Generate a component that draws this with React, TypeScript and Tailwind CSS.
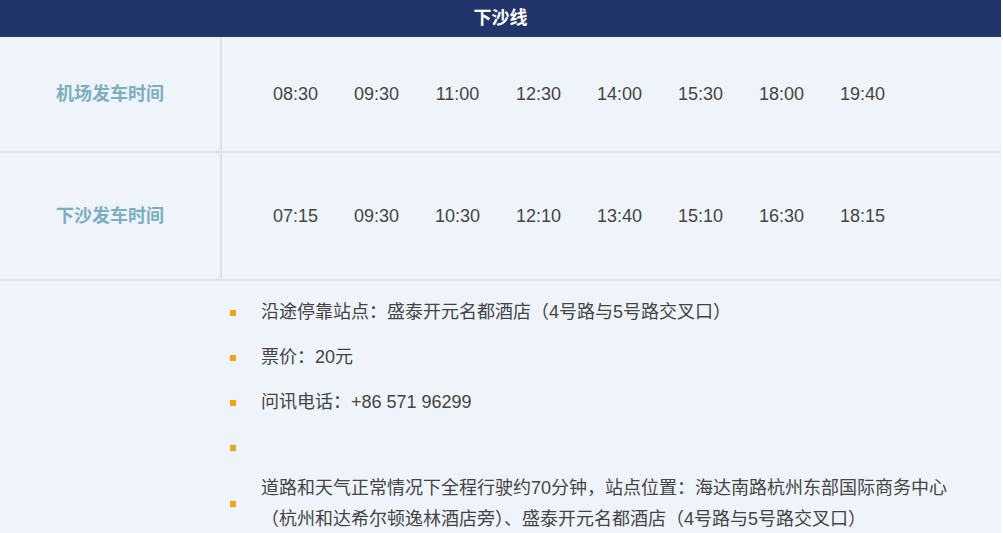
const airportTimes = ["08:30", "09:30", "11:00", "12:30", "14:00", "15:30", "18:00", "19:40"];
const xiashaTimes = ["07:15", "09:30", "10:30", "12:10", "13:40", "15:10", "16:30", "18:15"];

function TimeRow({ label, times, height }: { label: string; times: string[]; height: string }) {
  return (
    <div className={`flex border-b-2 border-[#dde2ea] ${height}`}>
      <div className="flex w-[222px] shrink-0 items-center justify-center border-r-2 border-[#dde2ea] text-[18px] font-bold text-[#7aafbf]">
        {label}
      </div>
      <div className="flex items-center pl-[33px] text-[18px] text-[#444]">
        {times.map((t, i) => (
          <span key={i} className="w-[81px] text-center">
            {t}
          </span>
        ))}
      </div>
    </div>
  );
}

export default function App() {
  return (
    <div
      className="h-[533px] w-[1003px] overflow-hidden bg-white pr-[2px]"
      style={{ fontFamily: '"Liberation Sans", "Noto Sans CJK SC", sans-serif' }}
    >
      <div className="h-full bg-[#eff4fb]">
        {/* Header */}
        <div className="flex h-[37px] items-center justify-center bg-[#22356b] text-[18px] font-bold text-white">
          下沙线
        </div>

        <TimeRow label="机场发车时间" times={airportTimes} height="h-[116px]" />
        <TimeRow label="下沙发车时间" times={xiashaTimes} height="h-[128px]" />

        {/* Notes */}
        <ul className="pl-[230px] pt-[9px] text-[18px] text-[#444]">
          {[
            "沿途停靠站点：盛泰开元名都酒店（4号路与5号路交叉口）",
            "票价：20元",
            "问讯电话：+86 571 96299",
            "",
          ].map((item, i) => (
            <li key={i} className="flex h-[45px] items-center">
              <span className="mr-[25px] h-[6px] w-[6px] shrink-0 bg-[#f7a215]" />
              <span>{item}</span>
            </li>
          ))}
          <li className="flex items-center py-[3px]">
            <span className="mr-[25px] h-[6px] w-[6px] shrink-0 bg-[#f7a215]" />
            <span className="leading-[31px]">
              道路和天气正常情况下全程行驶约70分钟，站点位置：海达南路杭州东部国际商务中心
              <br />
              （杭州和达希尔顿逸林酒店旁）、盛泰开元名都酒店（4号路与5号路交叉口）
            </span>
          </li>
        </ul>
      </div>
    </div>
  );
}
